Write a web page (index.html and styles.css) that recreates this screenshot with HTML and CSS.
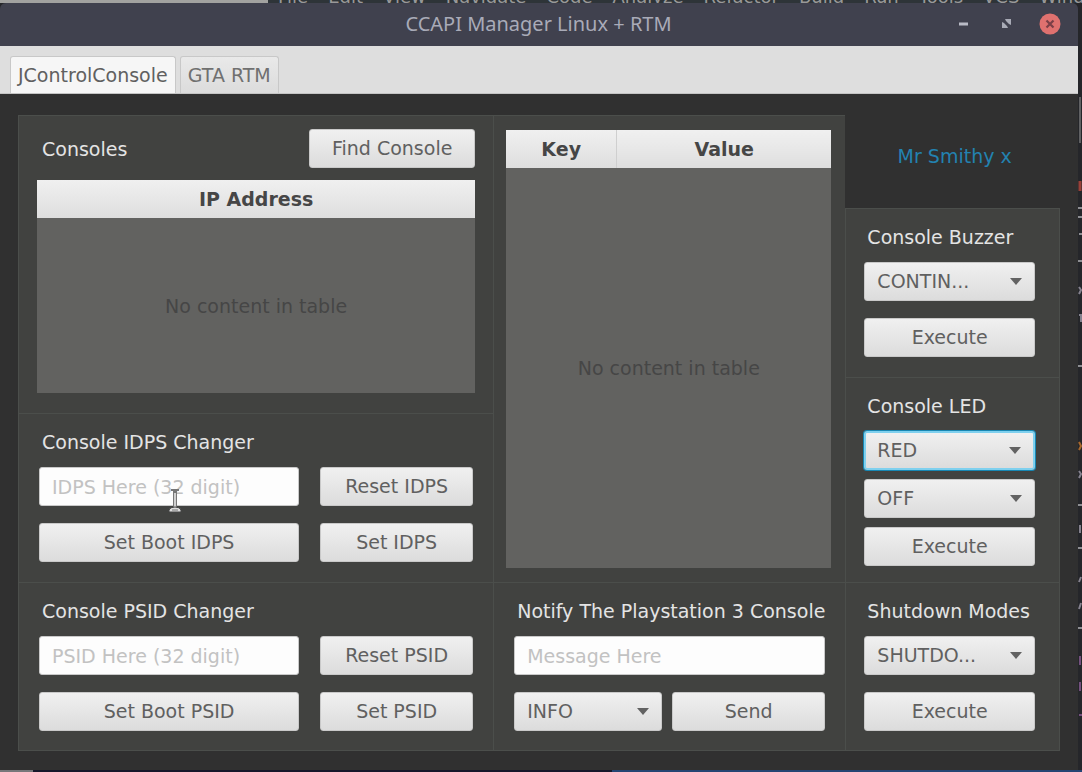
FILE: index.html
```
<!DOCTYPE html>
<html lang="en">
<head>
  <meta charset="UTF-8">
  <meta name="viewport" content="width=device-width, initial-scale=1.0">
  <title>CCAPI Manager Linux + RTM</title>
  <link rel="stylesheet" href="styles.css">
</head>
<body>
  <div class="desktop-top" aria-hidden="true">
    <span>File</span><span>Edit</span><span>View</span><span>Navigate</span><span>Code</span><span>Analyze</span><span>Refactor</span><span>Build</span><span>Run</span><span>Tools</span><span>VCS</span><span>Window</span>
  </div>
  <div class="desktop">
    <div class="window">
      <header class="titlebar">
        <h1>CCAPI Manager Linux + RTM</h1>
        <div class="window-buttons">
          <button type="button" aria-label="Minimize">
            <svg width="20" height="20" viewBox="0 0 20 20"><path d="M4 10h9" stroke="#b9bbc6" stroke-width="3"/></svg>
          </button>
          <button type="button" aria-label="Restore">
            <svg width="20" height="20" viewBox="0 0 20 20" fill="#a9abb6"><path d="M8 5h6v6l-2-1-3-3zM5 8l2 1 3 3 1 2H5z"/></svg>
          </button>
          <button type="button" aria-label="Close">
            <svg width="22" height="22" viewBox="0 0 22 22"><circle cx="11" cy="11" r="10.500" fill="#df716f"/><path d="M7.500 7.500l7 7M14.500 7.500l-7 7" stroke="#7b3f47" stroke-width="2.200"/></svg>
          </button>
        </div>
      </header>

      <nav class="tabs">
        <button type="button" class="tab active">JControlConsole</button>
        <button type="button" class="tab">GTA RTM</button>
      </nav>

      <main class="content">
        <div class="column">
          <section class="panel consoles">
            <div class="panel-head">
              <h2>Consoles</h2>
              <button type="button" class="btn">Find Console</button>
            </div>
            <table>
              <thead><tr><th>IP Address</th></tr></thead>
              <tbody><tr><td>No content in table</td></tr></tbody>
            </table>
          </section>

          <section class="panel">
            <h2><label for="idps">Console IDPS Changer</label></h2>
            <div class="pair">
              <div class="field">
                <input type="text" id="idps" placeholder="IDPS Here (32 digit)">
                <svg class="pointer" width="16" height="28" viewBox="0 0 16 28"><path d="M4 3h8" stroke="#777" stroke-width="2"/><path d="M8 3v18" stroke="#777" stroke-width="4"/><path d="M8 6v15" stroke="#d0d0d0" stroke-width="2"/><path d="M2 25v-2q1-3 6-3t6 3v2z" fill="#ddd" stroke="#444"/><path d="M5 23h6" stroke="#777"/></svg>
              </div>
              <button type="button" class="btn">Reset IDPS</button>
              <button type="button" class="btn">Set Boot IDPS</button>
              <button type="button" class="btn">Set IDPS</button>
            </div>
          </section>

          <section class="panel">
            <h2><label for="psid">Console PSID Changer</label></h2>
            <div class="pair">
              <input type="text" id="psid" placeholder="PSID Here (32 digit)">
              <button type="button" class="btn">Reset PSID</button>
              <button type="button" class="btn">Set Boot PSID</button>
              <button type="button" class="btn">Set PSID</button>
            </div>
          </section>
        </div>

        <div class="column">
          <section class="panel values">
            <table>
              <thead><tr><th class="key">Key</th><th>Value</th></tr></thead>
              <tbody><tr><td colspan="2">No content in table</td></tr></tbody>
            </table>
          </section>

          <section class="panel">
            <h2><label for="message">Notify The Playstation 3 Console</label></h2>
            <div class="notify">
              <input type="text" id="message" placeholder="Message Here">
              <select aria-label="Message type"><option>INFO</option></select>
              <button type="button" class="btn">Send</button>
            </div>
          </section>
        </div>

        <div class="column">
          <div class="credit"><a href="#">Mr Smithy x</a></div>

          <section class="panel side">
            <h2><label for="buzzer">Console Buzzer</label></h2>
            <div class="stack">
              <select id="buzzer"><option>CONTIN...</option></select>
              <button type="button" class="btn">Execute</button>
            </div>
          </section>

          <section class="panel side led">
            <h2><label for="led">Console LED</label></h2>
            <div class="stack">
              <select id="led" class="focused"><option>RED</option></select>
              <select aria-label="LED state"><option>OFF</option></select>
              <button type="button" class="btn">Execute</button>
            </div>
          </section>

          <section class="panel side">
            <h2><label for="shutdown">Shutdown Modes</label></h2>
            <div class="stack">
              <select id="shutdown"><option>SHUTDO...</option></select>
              <button type="button" class="btn">Execute</button>
            </div>
          </section>
        </div>
      </main>
    </div>
    <div class="desktop-side">
      <!-- sliver of the editor behind the window -->
      <svg width="4" height="740" viewBox="0 0 4 740">
        <path d="M2 94v46" stroke="#606163" stroke-width="2"/>
        <path d="M2 178v10" stroke="#9a4038" stroke-width="3"/>
        <path d="M0 205h4M0 214h4M1 231h3M0 258h4M0 363h4M0 502h4M0 545h4M0 625h4" stroke="#8d8e92" stroke-width="2"/>
        <path d="M1 284l2 3-2 4M1 312h2v7M1 468l2 3-2 4M2 522v8M3 574l-2 5M3 600l-2 6" stroke="#85828e" stroke-width="2" fill="none"/>
        <path d="M1 439l2 4-2 4" stroke="#a8682c" stroke-width="2" fill="none"/>
        <path d="M2 653v9M2 679v9M1 712h3" stroke="#74507e" stroke-width="2"/>
      </svg>
    </div>
  </div>
  <div class="desktop-bottom"></div>
</body>
</html>
```
FILE: styles.css
```
* {
  box-sizing: border-box;
}
body {
  margin: 0;
  min-height: 100vh;
  display: flex;
  flex-direction: column;
  background: #25262a;
  font-family: "DejaVu Sans", sans-serif;
  font-size: 19px;
  color: #e4e4e4;
}
/* edges of the desktop around the window */
.desktop-top {
  display: flex;
  align-items: flex-end;
  gap: 20px;
  height: 3px;
  padding-left: 278px;
  overflow: hidden;
  background: linear-gradient(to right, #a2a2a0 268px, #2e3438 268px);
  font-size: 18px;
  line-height: 12px;
  color: #999;
}
.desktop {
  flex: 1;
  display: flex;
}
.desktop-side {
  width: 4px;
  overflow: hidden;
}
.desktop-bottom {
  height: 2px;
  background: linear-gradient(to right, #77777a 33px, #17182b 33px 612px, #254573 612px);
}
.window {
  flex: 1;
  background: #303030;
  border-radius: 6px 6px 0 0;
  overflow: hidden;
}
.titlebar {
  display: grid;
  grid-template-columns: 1fr auto 1fr;
  align-items: center;
  height: 43px;
  padding: 0 17px 1px 16px;
  background: #40414e;
}
.titlebar h1 {
  grid-column: 2;
  margin: 0;
  padding-bottom: 2px;
  font-family: "Noto Sans", sans-serif;
  font-size: 20px;
  font-weight: normal;
  color: #a9abb8;
}
.window-buttons {
  display: flex;
  align-items: center;
  justify-content: flex-end;
  gap: 22px;
}
.window-buttons button {
  display: flex;
  padding: 0;
  border: none;
  background: none;
}
.tabs {
  display: flex;
  align-items: flex-end;
  gap: 4px;
  height: 48px;
  padding-left: 10px;
  background: #dedede;
  border-bottom: 1px solid #c4c4c4;
}
.tab {
  height: 37px;
  padding: 0 7px;
  border: 1px solid #c8c8c8;
  border-bottom: none;
  border-radius: 3px 3px 0 0;
  background: linear-gradient(#e9e9e9, #dcdcdc);
  font: inherit;
  color: #707070;
}
.tab.active {
  background: #f6f6f6;
  color: #606060;
}
.content {
  display: grid;
  grid-template-columns: 476fr 351fr 215fr;
  padding: 21px 18px 18px;
}
.column {
  display: flex;
  flex-direction: column;
}
.panel {
  padding: 16px 20px 20px;
  background: #414240;
  border-top: 1px solid #4b4e4b;
  border-left: 1px solid #4b4e4b;
}
.panel h2 {
  margin: 0 0 13px 3px;
  font-size: inherit;
  font-weight: normal;
  line-height: 24px;
  white-space: nowrap;
}
.consoles {
  padding: 13px 18px 20px;
}
.panel-head {
  display: flex;
  align-items: center;
  justify-content: space-between;
  margin-bottom: 12px;
}
.panel-head h2 {
  margin: 0 0 0 5px;
}
.panel-head .btn {
  width: 166px;
}
.values {
  padding: 14px 14px 14px 12px;
}
.side {
  padding-left: 18px;
  padding-right: 24px;
  border-right: 1px solid #4b4e4b;
}
.column .panel:last-child {
  padding-bottom: 19px;
  border-bottom: 1px solid #4b4e4b;
}
.credit {
  display: flex;
  align-items: center;
  justify-content: center;
  height: 93px;
  padding: 0 0 12px 4px;
}
.credit a {
  color: #2382b0;
  text-decoration: none;
}
.pair {
  display: grid;
  grid-template-columns: 260fr 153fr;
  gap: 17px 21px;
}
.field {
  position: relative;
}
.pointer {
  position: absolute;
  left: 128px;
  top: 20px;
}
.notify {
  display: grid;
  grid-template-columns: 147fr 153fr;
  gap: 17px 10px;
}
.notify input {
  grid-column: 1 / 3;
}
.stack {
  display: grid;
  gap: 17px;
}
.led {
  padding-bottom: 16px;
}
.led .stack {
  gap: 9px;
}
.btn, input, select {
  width: 100%;
  min-width: 0;
  height: 39px;
  margin: 0;
  border: 1px solid #c9c9c9;
  border-radius: 3px;
  font: inherit;
  color: #606060;
}
.btn {
  padding: 0 0 1px;
  background: linear-gradient(#f0f0f0, #dcdcdc);
}
input {
  padding: 0 12px;
  background: #fdfdfd;
}
input::placeholder {
  color: #c2c2c2;
}
select {
  appearance: none;
  padding: 0 30px 1px 12px;
  background: url("data:image/svg+xml,%3Csvg xmlns='http://www.w3.org/2000/svg' width='12' height='7'%3E%3Cpath d='M0 0h12L6 7z' fill='%23626262'/%3E%3C/svg%3E") no-repeat right 12px center, linear-gradient(#f0f0f0, #dcdcdc);
}
select.focused {
  border: 2px solid #7fd0ee;
  padding-left: 11px;
  box-shadow: 0 0 0 1px #1787b3;
}
table {
  width: 100%;
  border-collapse: collapse;
  table-layout: fixed;
}
th {
  height: 38px;
  padding: 0;
  background: linear-gradient(#f0f0f0, #dedede);
  color: #464646;
}
th.key {
  width: 34%;
  border-right: 1px solid #cfcfcf;
}
td {
  height: 175px;
  padding: 0;
  background: #626260;
  color: #464646;
  text-align: center;
}
.values td {
  height: 400px;
}
```
